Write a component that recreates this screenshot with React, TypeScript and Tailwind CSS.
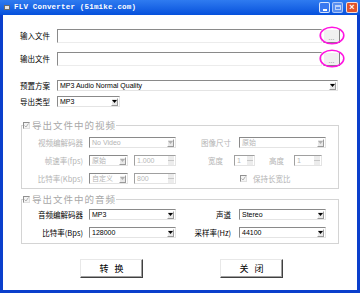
import React from "react";

const cjk = { fontFamily: '"Noto Sans CJK SC", "Noto Sans", sans-serif' };
const lat = { fontFamily: '"Liberation Sans", "Noto Sans CJK SC", sans-serif' };

function Arrow({ grey }: { grey?: boolean }) {
  return (
    <svg width="5" height="3" viewBox="0 0 5 3">
      <path d="M0 0h5L2.5 3z" fill={grey ? "#b0b0b0" : "#000"} />
    </svg>
  );
}

function Select({ w, value, disabled }: { w: string; value: string; disabled?: boolean }) {
  return (
    <div
      className={`${w} h-[11px] flex items-center border border-t-[#8a8a8a] border-l-[#8a8a8a] border-b-[#e4e4e4] border-r-[#e4e4e4] bg-white`}
    >
      <span
        className={`flex-1 whitespace-nowrap pl-[2px] text-[7px] leading-none ${disabled ? "text-[#b4b4b4]" : "text-black"}`}
        style={lat}
      >
        {value}
      </span>
      <div className="w-[7px] h-[8px] shrink-0 mr-[1px] flex items-center justify-center bg-[#e8e8e8] border border-t-white border-l-white border-b-[#9a9a9a] border-r-[#9a9a9a]">
        <Arrow grey={disabled} />
      </div>
    </div>
  );
}

function Spin({ w, value }: { w: string; value: string }) {
  return (
    <div
      className={`${w} h-[11px] flex items-center border border-t-[#a0a0a0] border-l-[#a0a0a0] border-b-[#e4e4e4] border-r-[#e4e4e4] bg-white`}
    >
      <span className="flex-1 pl-[2px] text-[7px] leading-none text-[#b8b8b8]" style={lat}>
        {value}
      </span>
      <div className="w-[6px] h-[9px] mr-[1px] flex flex-col bg-[#ececec]">
        <div className="flex-1 border-b border-[#c8c8c8]" />
        <div className="flex-1" />
      </div>
    </div>
  );
}

function Check({ grey }: { grey?: boolean }) {
  return (
    <div className="w-[7px] h-[7px] border border-t-[#909090] border-l-[#909090] border-b-[#e0e0e0] border-r-[#e0e0e0] bg-[#f4f4f4] flex items-center justify-center">
      <svg width="5" height="5" viewBox="0 0 5 5">
        <path d="M0.5 2.5l1.5 1.5 2.5-3.5" stroke={grey ? "#b0b0b0" : "#999"} strokeWidth="1" fill="none" />
      </svg>
    </div>
  );
}

function Label({ children, w, grey }: { children: React.ReactNode; w: string; grey?: boolean }) {
  return (
    <span
      className={`${w} text-right text-[7.5px] leading-none ${grey ? "text-[#b4b4b4]" : "text-black"}`}
      style={cjk}
    >
      {children}
    </span>
  );
}

function Browse() {
  return (
    <div className="relative w-[17px] h-[14px] ml-[1px]">
      <div className="w-full h-full flex items-end justify-center bg-[#f0f0f0] border border-t-white border-l-white border-b-[#808080] border-r-[#808080] text-[7px] leading-[8px] text-[#808080]" style={lat}>
        ...
      </div>
      <svg className="absolute left-[-4px] top-[-3px]" width="26" height="19" viewBox="0 0 26 19">
        <ellipse cx="13" cy="9.5" rx="11.8" ry="8.3" stroke="#ff14e0" strokeWidth="1.6" fill="none" />
      </svg>
    </div>
  );
}

function Group({ title, children, h }: { title: string; children: React.ReactNode; h: string }) {
  return (
    <fieldset className={`ml-[18px] w-[318px] ${h} border border-[#d4d4d4] pl-0`}>
      <legend className="ml-[1px] px-0 flex items-center gap-[2px]">
        <Check grey />
        <span className="text-[9.5px] leading-[12px] text-[#a8a8a8] tracking-[1px]" style={cjk}>
          {title}
        </span>
      </legend>
      {children}
    </fieldset>
  );
}

function Btn({ children }: { children: React.ReactNode }) {
  return (
    <div className="w-[63px] h-[19px] flex items-center justify-center bg-white border border-t-[#e8e8e8] border-l-[#e8e8e8] border-b-[#404040] border-r-[#404040] shadow-[inset_-1px_-1px_0_#a0a0a0]">
      <span className="text-[9px] leading-none text-black tracking-[6px] pl-[6px]" style={cjk}>
        {children}
      </span>
    </div>
  );
}

export default function App() {
  return (
    <div className="w-[360px] h-[293px] flex flex-col bg-[#0a3fcc]">
      <div className="h-[15px] flex items-center bg-gradient-to-b from-[#2f7bf0] to-[#0550dc] pr-[2px]">
        <div className="w-[6px] h-[5px] ml-[4px] bg-[#e6e6e6] border border-[#6a6a6a]" />
        <span
          className="ml-[4px] text-[7.5px] leading-none font-bold text-white tracking-[0.2px]"
          style={{ fontFamily: '"Liberation Mono", "DejaVu Sans Mono", monospace' }}
        >
          FLV Converter (51mike.com)
        </span>
        <div className="ml-auto flex items-center gap-[2px]">
          <div className="w-[11px] h-[11px] rounded-[2px] bg-[#3a78f0] border border-white/80 flex items-end justify-center pb-[1px]">
            <div className="w-[4px] h-[2px] bg-white" />
          </div>
          <div className="w-[11px] h-[11px] rounded-[2px] bg-[#5a8ff0] border border-white/50 flex items-center justify-center">
            <div className="w-[6px] h-[5px] border border-white/60 border-t-2" />
          </div>
          <div className="w-[12px] h-[11px] ml-[1px] rounded-[2px] bg-[#e0542c] border border-white/80 flex items-center justify-center text-white text-[9px] leading-none font-bold" style={lat}>
            ×
          </div>
        </div>
      </div>
      <div className="flex-1 mx-[3px] mb-[3px] bg-white flex flex-col">
        <div className="flex items-center mt-[14px] pl-[17px]">
          <span className="w-[37px] text-[7.5px] leading-none" style={cjk}>输入文件</span>
          <div className="w-[265px] h-[14px] border border-t-[#8a8a8a] border-l-[#8a8a8a] border-b-[#ececec] border-r-[#ececec]" />
          <Browse />
        </div>
        <div className="flex items-center mt-[9px] pl-[17px]">
          <span className="w-[37px] text-[7.5px] leading-none" style={cjk}>输出文件</span>
          <div className="w-[265px] h-[14px] border border-t-[#8a8a8a] border-l-[#8a8a8a] border-b-[#ececec] border-r-[#ececec]" />
          <Browse />
        </div>
        <div className="flex items-center mt-[14px] pl-[17px]">
          <span className="w-[37px] text-[7.5px] leading-none" style={cjk}>预置方案</span>
          <Select w="w-[281px]" value="MP3 Audio Normal Quality" />
        </div>
        <div className="flex items-center mt-[5px] pl-[17px]">
          <span className="w-[37px] text-[7.5px] leading-none" style={cjk}>导出类型</span>
          <Select w="w-[63px]" value="MP3" />
        </div>
        <div className="mt-[12px]">
          <Group title="导出文件中的视频" h="h-[70px]">
            <div className="flex flex-col gap-[7px] mt-[6px]">
              <div className="flex items-center">
                <Label w="w-[61px]" grey>视频编解码器</Label>
                <div className="ml-[6px]"><Select w="w-[87px]" value="No Video" disabled /></div>
                <Label w="w-[55px]" grey>图像尺寸</Label>
                <div className="ml-[8px]"><Select w="w-[87px]" value="原始" disabled /></div>
              </div>
              <div className="flex items-center">
                <Label w="w-[61px]" grey>帧速率(fps)</Label>
                <div className="ml-[6px]"><Select w="w-[39px]" value="原始" disabled /></div>
                <div className="ml-[6px]"><Spin w="w-[42px]" value="1.000" /></div>
                <Label w="w-[47px]" grey>宽度</Label>
                <div className="ml-[11px]"><Spin w="w-[21px]" value="1" /></div>
                <Label w="w-[29px]" grey>高度</Label>
                <div className="ml-[10px]"><Spin w="w-[28px]" value="1" /></div>
              </div>
              <div className="flex items-center">
                <Label w="w-[61px]" grey>比特率(Kbps)</Label>
                <div className="ml-[6px]"><Select w="w-[39px]" value="自定义" disabled /></div>
                <div className="ml-[6px]"><Spin w="w-[42px]" value="800" /></div>
                <div className="ml-[64px]"><Check grey /></div>
                <span className="ml-[6px] text-[7.5px] leading-none text-[#b4b4b4]" style={cjk}>保持长宽比</span>
              </div>
            </div>
          </Group>
        </div>
        <div className="mt-[4px]">
          <Group title="导出文件中的音频" h="h-[51px]">
            <div className="flex flex-col gap-[7px] mt-[4px]">
              <div className="flex items-center">
                <Label w="w-[61px]">音频编解码器</Label>
                <div className="ml-[6px]"><Select w="w-[87px]" value="MP3" /></div>
                <Label w="w-[55px]">声道</Label>
                <div className="ml-[8px]"><Select w="w-[87px]" value="Stereo" /></div>
              </div>
              <div className="flex items-center">
                <Label w="w-[61px]">比特率(Bps)</Label>
                <div className="ml-[6px]"><Select w="w-[87px]" value="128000" /></div>
                <Label w="w-[55px]">采样率(Hz)</Label>
                <div className="ml-[8px]"><Select w="w-[87px]" value="44100" /></div>
              </div>
            </div>
          </Group>
        </div>
        <div className="flex mt-[15px] pl-[77px] gap-[77px]">
          <Btn>转换</Btn>
          <Btn>关闭</Btn>
        </div>
      </div>
    </div>
  );
}
